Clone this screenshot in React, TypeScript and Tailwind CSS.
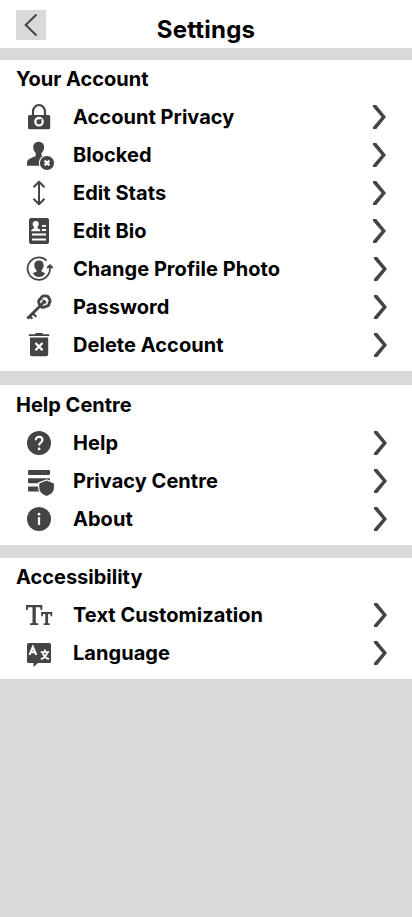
import type { ReactNode } from "react";

const INK = "#444445";

function Icon({ children }: { children: ReactNode }) {
  return (
    <svg viewBox="0 0 30 30" className="ml-6 h-[30px] w-[30px] shrink-0 overflow-visible" fill={INK} aria-hidden="true">
      {children}
    </svg>
  );
}

const lock = (
  <Icon>
    <path d="M9 14V9.500a6 6.500 0 0 1 12 0V14" fill="none" stroke={INK} strokeWidth="2.200" />
    <rect x="4" y="13" width="22.200" height="14.200" rx="1.500" />
    <circle cx="15" cy="19.700" r="3.700" fill="none" stroke="#fff" strokeWidth="2.300" />
    <path d="M15.500 19.200l2-2" stroke={INK} strokeWidth="1.600" />
  </Icon>
);

const blocked = (
  <Icon>
    <path d="M14.700 1.700c3.300 0 5.500 2.300 5.500 5.600 0 2.600-1.300 4.400-2.600 5.700v2.700l7.400 4v6H3v-2.200c0-3 1-4 3.200-4.900l5.500-2.600V13c-1.300-1.300-2.500-3.200-2.500-5.700 0-3.300 2.200-5.600 5.500-5.600z" />
    <circle cx="23" cy="23" r="8.200" fill="#fff" />
    <circle cx="23" cy="23" r="7.100" />
    <path d="M20.600 20.600l4.800 4.800M25.400 20.600l-4.800 4.800" stroke="#fff" strokeWidth="2.200" />
  </Icon>
);

const stats = (
  <Icon>
    <path d="M15 4v22M9.500 9.200L15 3.700l5.500 5.500M9.500 20.800l5.500 5.500 5.500-5.500" fill="none" stroke={INK} strokeWidth="2" strokeLinejoin="round" />
  </Icon>
);

const bio = (
  <Icon>
    <rect x="5" y="2" width="20" height="26" rx="2" />
    <path d="M11.700 5c1.900 0 3 1.300 3 3.100 0 1.400-.6 2.400-1.300 3v1.200c1.600.6 3 .9 3 2.900H7.200c0-2 1.400-2.300 2.900-2.900v-1.200c-.8-.6-1.400-1.600-1.400-3 0-1.800 1.100-3.100 3-3.100z" fill="#fff" />
    <path d="M18 9.800h4M18 14h4M8 18.500h14M8 23.500h14" stroke="#fff" strokeWidth="1.800" />
  </Icon>
);

const photo = (
  <Icon>
    <path d="M22.600 6.600A11.200 11.200 0 1 0 26 14.600V11.800" fill="none" stroke={INK} strokeWidth="1.800" />
    <path d="M23.200 14L26 11.300l2.600 2.700" fill="none" stroke={INK} strokeWidth="2" />
    <path d="M15 6.600c3.100 0 4.700 1.900 4.700 4.700 0 2.200-1 3.900-2.200 4.900v1.400l3.700 1.600C20 21.500 18 23 15 23s-5-1.500-6.200-3.800l3.800-1.600v-1.400c-1.200-1-2.300-2.700-2.300-4.900C10.300 8.500 11.900 6.600 15 6.600z" />
  </Icon>
);

const key = (
  <Icon>
    <path d="M15.200 11.900C14.100 9.600 14.700 7.400 16.900 6.700 17.200 4.700 19 3.400 21 4c1.700-.5 3.700.3 4 2.400 1.300 1.300 1.400 3.400.2 4.700-.1 2.200-1.600 3.400-3.600 3.300-1.500 1.400-3.700 1.300-5-.2z" fill="none" stroke={INK} strokeWidth="2.900" />
    <path d="M20.500 9.500L4.300 25.700" stroke={INK} strokeWidth="2.900" />
    <path d="M19.700 8.900l1.500 1.500" stroke={INK} strokeWidth="2.600" strokeLinecap="round" />
    <path d="M8.700 21.300l3.600 3.400M5.600 24l2.800 2.800M3.200 24.800l2 2" stroke={INK} strokeWidth="2.200" />
  </Icon>
);

const trash = (
  <Icon>
    <path d="M11.300 3h7.400v1.200h6.500v1.700H4.800V4.200h6.500zM6 7.400h18.200v16.800a2 2 0 0 1-2 2H8a2 2 0 0 1-2-2z" />
    <path d="M11.500 13l7 7.200M18.500 13l-7 7.200" stroke="#fff" strokeWidth="2.300" />
  </Icon>
);

const help = (
  <Icon>
    <circle cx="15" cy="15" r="12" />
    <path d="M11.700 12.200c0-2 1.400-3.300 3.400-3.300s3.300 1.200 3.300 3c0 2.600-3.300 2.700-3.300 5.200v.4" fill="none" stroke="#fff" strokeWidth="2.100" />
    <circle cx="15.100" cy="20.900" r="1.400" fill="#fff" />
  </Icon>
);

const privacy = (
  <Icon>
    <rect x="4" y="4" width="22" height="5" rx="1" />
    <rect x="4" y="12.300" width="22" height="5" rx="1" />
    <rect x="4" y="20.600" width="14" height="5" rx="1" />
    <path d="M22.800 13.300l8.200 3.300v5.200c0 4.400-3 7.600-8.200 9.300-5.200-1.700-8.700-4.900-8.700-9.300v-5.200z" fill="#fff" />
    <path d="M22.600 14.600l7.300 2.800v4.300c0 3.900-2.800 6.600-7.300 8.200-4.500-1.600-7.300-4.300-7.300-8.200v-4.300z" />
  </Icon>
);

const about = (
  <Icon>
    <circle cx="15" cy="15" r="12" />
    <circle cx="15" cy="10.200" r="1.400" fill="#fff" />
    <path d="M15 13v8" stroke="#fff" strokeWidth="2.200" />
  </Icon>
);

const textSize = (
  <Icon>
    <path d="M2 5h16.300v5h-1.600l-.6-2.800h-4.300v15.800l2.500.4V25H6v-1.600l2.500-.4V7.200H4.200L3.600 10H2z" />
    <path d="M17.200 12H28.200v4.200h-1.500l-.5-2.200h-2.100v9.200l1.700.4V25h-6.200v-1.400l1.700-.4V14h-2.200l-.4 2.200h-1.500z" />
  </Icon>
);

const language = (
  <Icon>
    <path d="M4.500 5h21A1.500 1.500 0 0 1 27 6.500v17a1.500 1.500 0 0 1-1.500 1.500h-11.500L9.500 29v-4h-5A1.500 1.500 0 0 1 3 23.500v-17A1.500 1.500 0 0 1 4.500 5z" />
    <path d="M5.500 16.800l3.400-7.800 3.400 7.800M6.900 14.300h4" fill="none" stroke="#fff" strokeWidth="2.100" />
    <path d="M16.700 14.200h8.400M20.900 11.500v2.700M18.500 14.500c.9 3 3.100 5.600 6.500 6.700M23.300 14.500c-.9 3-3.100 5.600-6.500 6.700" fill="none" stroke="#fff" strokeWidth="1.800" />
  </Icon>
);

type Item = { label: string; icon: ReactNode; inset?: boolean };

const account: Item[] = [
  { label: "Account Privacy", icon: lock, inset: true },
  { label: "Blocked", icon: blocked, inset: true },
  { label: "Edit Stats", icon: stats, inset: true },
  { label: "Edit Bio", icon: bio, inset: true },
  { label: "Change Profile Photo", icon: photo },
  { label: "Password", icon: key },
  { label: "Delete Account", icon: trash },
];
const centre: Item[] = [
  { label: "Help", icon: help },
  { label: "Privacy Centre", icon: privacy },
  { label: "About", icon: about },
];
const access: Item[] = [
  { label: "Text Customization", icon: textSize },
  { label: "Language", icon: language },
];

function Section({ title, items }: { title: string; items: Item[] }) {
  return (
    <section className="bg-white pb-[7px]">
      <h2 className="flex h-[38px] items-center pl-4 text-[20px] font-bold">{title}</h2>
      <ul>
        {items.map((item) => (
          <li key={item.label} className="flex h-[38px] items-center">
            {item.icon}
            <span className="ml-[19px] flex-1 text-[20px] font-bold tracking-[0.04px]">{item.label}</span>
            <svg
              viewBox="0 0 14 24"
              className={`h-6 w-3.5 shrink-0 ${item.inset ? "mr-[26px]" : "mr-[25px]"}`}
              fill={INK}
              aria-hidden="true"
            >
              <path d="M1 0h3.200L14 12 4.200 24H1V22L9.600 12 1 2z" />
            </svg>
          </li>
        ))}
      </ul>
    </section>
  );
}

export default function App() {
  return (
    <div className="min-h-screen w-full bg-[#d9d9d9] font-['Inter',sans-serif] text-black">
      <header className="grid h-12 grid-cols-[1fr_auto_1fr] bg-white">
        <button className="ml-4 mt-2.5 flex h-[30px] w-[30px] items-center justify-center bg-[#d9d9d9]" aria-label="Back">
          <svg viewBox="0 0 30 30" className="h-[30px] w-[30px]" fill="none" stroke={INK} strokeWidth="2">
            <path d="M20.500 4.500L9.700 15l10.800 10.500" />
          </svg>
        </button>
        <h1 className="mt-[14px] text-2xl font-bold leading-8 tracking-[0.2px]">Settings</h1>
      </header>
      <main className="pt-3">
        <Section title="Your Account" items={account} />
        <div className="mt-3.5 bg-white pt-px">
          <Section title="Help Centre" items={centre} />
        </div>
        <div className="mt-[13px]">
          <Section title="Accessibility" items={access} />
        </div>
      </main>
    </div>
  );
}
